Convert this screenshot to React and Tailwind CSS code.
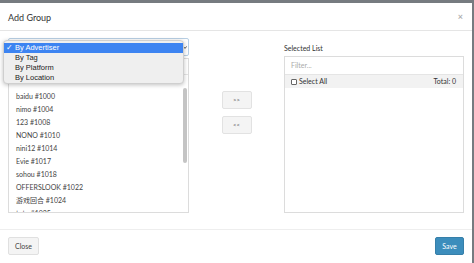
import React from "react";

const items = [
  "baidu #1000",
  "nimo #1004",
  "123 #1008",
  "NONO #1010",
  "nini12 #1014",
  "Evie #1017",
  "sohou #1018",
  "OFFERSLOOK #1022",
  "游戏回合 #1024",
  "tutu #1025",
];

const lato = { fontFamily: 'Lato, "Noto Sans CJK SC", sans-serif' };

export default function App() {
  return (
    <div className="w-[474px] h-[263px] bg-[#767b80] overflow-hidden pt-[3px]" style={lato}>
      <div className="relative w-[472px] h-[260px] bg-white flex flex-col">
        {/* Header */}
        <div className="h-[28px] shrink-0 border-b border-[#e5e5e5] flex items-center justify-between pl-[8px] pr-[9px]">
          <span className="text-[9px] text-[#333] leading-none mt-[1px]">Add Group</span>
          <span className="text-[9px] text-[#b0b0b0] leading-none font-bold">×</span>
        </div>

        {/* Body */}
        <div className="h-[198px] shrink-0 flex px-[8px] pt-[7px]">
          {/* Left column */}
          <div className="w-[181px] flex flex-col">
            <div className="relative h-[18px] border border-[#b8cfe4] rounded-[2px] bg-white">
              <svg className="absolute right-[1px] top-[7px]" width="4" height="3" viewBox="0 0 4 3">
                <path d="M0.3 0.4 L2 2.4 L3.7 0.4" fill="none" stroke="#444" strokeWidth="0.9" />
              </svg>
            </div>
            <div className="mt-[2px] h-[155px] border border-[#dcdcdc] flex flex-col overflow-hidden">
              <div className="h-[16px] shrink-0 border-b border-[#e5e5e5]"></div>
              <div className="h-[12px] shrink-0"></div>
              <div className="relative flex-1 overflow-hidden pt-[3px] pl-[7px]">
                {items.map((t) => (
                  <div key={t} className="h-[13px] leading-[13px] text-[7px] text-[#444] whitespace-nowrap">{t}</div>
                ))}
                <div className="absolute right-[1px] top-[1px] w-[4px] h-[75px] rounded-full bg-[#c4c4c4]"></div>
              </div>
            </div>
          </div>

          {/* Middle */}
          <div className="w-[95px] flex flex-col items-center pt-[53px] gap-[7px]">
            <button className="w-[30px] h-[18px] bg-[#f4f4f4] border border-[#e2e2e2] rounded-[2px] text-[6px] text-[#555] leading-none flex items-center justify-center">&gt;&gt;</button>
            <button className="w-[30px] h-[18px] bg-[#f4f4f4] border border-[#e2e2e2] rounded-[2px] text-[6px] text-[#555] leading-none flex items-center justify-center">&lt;&lt;</button>
          </div>

          {/* Right column */}
          <div className="w-[180px] flex flex-col">
            <div className="mt-[5px] h-[10px] leading-[10px] text-[7px] text-[#333]">Selected List</div>
            <div className="mt-[3px] h-[157px] border border-[#dcdcdc] flex flex-col">
              <div className="h-[18px] shrink-0 border-b border-[#e5e5e5] text-[7px] text-[#aaa] pl-[6px] flex items-center">Filter...</div>
              <div className="h-[13px] shrink-0 bg-[#f2f2f2] flex items-center justify-between pl-[6px] pr-[7px] text-[7px] text-[#333]">
                <div className="flex items-center gap-[2px]">
                  <span className="w-[6px] h-[6px] border border-[#666] rounded-[1px] bg-white"></span>
                  <span>Select All</span>
                </div>
                <span>Total: 0</span>
              </div>
            </div>
          </div>
        </div>

        {/* Footer */}
        <div className="flex-1 border-t border-[#eeeeee] flex justify-between items-start px-[8px] pt-[7px]">
          <button className="w-[31px] h-[18px] bg-[#f4f4f4] border border-[#e0e0e0] rounded-[2px] text-[7px] text-[#444] flex items-center justify-center">Close</button>
          <button className="w-[29px] h-[18px] bg-[#3c8dbc] border border-[#367fa9] rounded-[2px] text-[7px] text-white flex items-center justify-center">Save</button>
        </div>

        {/* Open native dropdown */}
        <div
          className="absolute left-[3px] top-[37px] w-[181px] h-[44px] bg-[#efefef] border border-[#cfcfcf] rounded-[4px] shadow-[0_1px_4px_rgba(0,0,0,0.25)] pt-[2px] text-[7.5px] text-[#222] leading-[10px]"
          style={{ fontFamily: '"Liberation Sans", Arial, sans-serif' }}
        >
          <div className="h-[10px] bg-[#3d84f1] text-white flex items-center">
            <span className="w-[11px] pl-[2px]">✓</span>
            <span>By Advertiser</span>
          </div>
          <div className="h-[10px] pl-[11px] flex items-center">By Tag</div>
          <div className="h-[10px] pl-[11px] flex items-center">By Platform</div>
          <div className="h-[10px] pl-[11px] flex items-center">By Location</div>
        </div>
      </div>
    </div>
  );
}
